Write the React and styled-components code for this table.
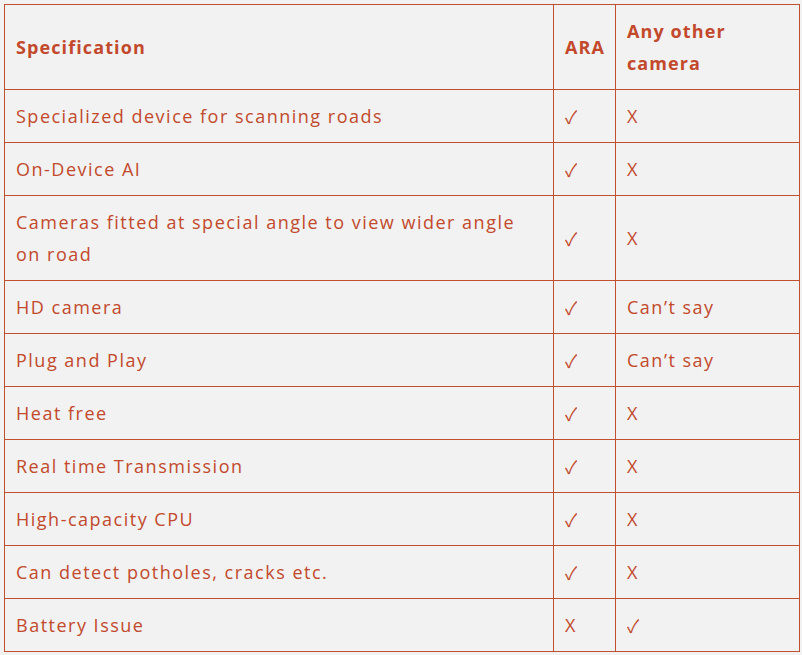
import React from "react";
import styled, { createGlobalStyle } from "styled-components";

const Global = createGlobalStyle`
  html, body { margin: 0; padding: 0; background: #f2f2f2; }
  body { font-family: "Open Sans", "Noto Sans", sans-serif; }
`;

const Wrap = styled.div`
  padding: 4px;
`;

const Table = styled.table`
  border-collapse: collapse;
  width: 795px;
  table-layout: fixed;
  color: #c2492b;
  font-size: 18px;
  line-height: 32px;
  letter-spacing: 1.5px;
`;

const Col = styled.col`
  width: ${(p) => p.$w}px;
`;

const Head = styled.th`
  border: 1px solid #c0502e;
  padding: 10px 9px 10px 11px;
  text-align: left;
  font-weight: 700;
  font-size: 18px;
  letter-spacing: 1.1px;
  vertical-align: middle;
`;

const Cell = styled.td`
  border: 1px solid #c0502e;
  padding: 10px 9px 10px 11px;
  height: 32px;
  vertical-align: middle;
  font-weight: 400;
`;

const Check = styled.span`
  display: inline-block;
  height: 32px;
  line-height: 32px;
  vertical-align: top;
  font-family: "Noto Sans CJK JP", "DejaVu Sans", sans-serif;
  font-weight: 400;
  font-size: 18px;
  letter-spacing: 0;
  overflow: hidden;
`;

const rows = [
  ["Specialized device for scanning roads", "✓", "X"],
  ["On-Device AI", "✓", "X"],
  ["Cameras fitted at special angle to view wider angle on road", "✓", "X"],
  ["HD camera", "✓", "Can’t say"],
  ["Plug and Play", "✓", "Can’t say"],
  ["Heat free", "✓", "X"],
  ["Real time Transmission", "✓", "X"],
  ["High-capacity CPU", "✓", "X"],
  ["Can detect potholes, cracks etc.", "✓", "X"],
  ["Battery Issue", "X", "✓"],
];

const Val = ({ v }) => (v === "✓" ? <Check>✓</Check> : v);

export default function App() {
  return (
    <>
      <Global />
      <Wrap>
        <Table>
          <colgroup>
            <Col $w={549} />
            <Col $w={62} />
            <Col $w={184} />
          </colgroup>
          <thead>
            <tr>
              <Head>Specification</Head>
              <Head>ARA</Head>
              <Head>Any other camera</Head>
            </tr>
          </thead>
          <tbody>
            {rows.map((r, i) => (
              <tr key={i}>
                <Cell>{r[0]}</Cell>
                <Cell><Val v={r[1]} /></Cell>
                <Cell><Val v={r[2]} /></Cell>
              </tr>
            ))}
          </tbody>
        </Table>
      </Wrap>
    </>
  );
}
